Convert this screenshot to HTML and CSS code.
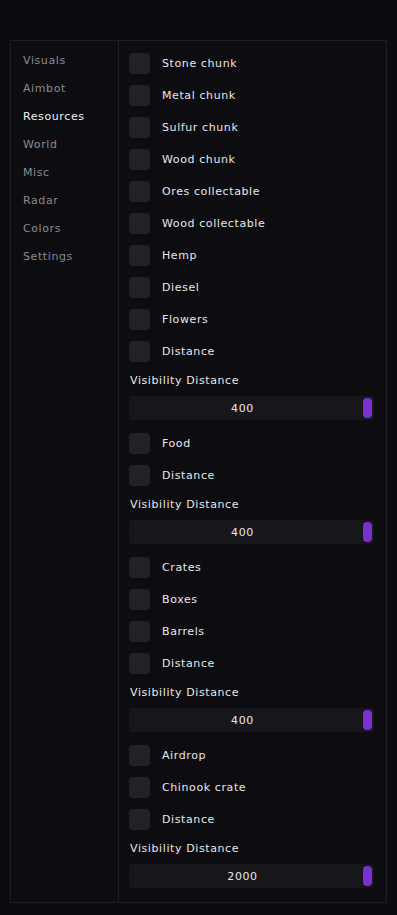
FILE: index.html
```html
<!DOCTYPE html>
<html>
<head>
<meta charset="utf-8">
<link rel="stylesheet" href="styles.css">
</head>
<body>
<div class="panel">
  <nav class="sidebar">
    <div class="tab">Visuals</div>
    <div class="tab">Aimbot</div>
    <div class="tab active">Resources</div>
    <div class="tab">World</div>
    <div class="tab">Misc</div>
    <div class="tab">Radar</div>
    <div class="tab">Colors</div>
    <div class="tab">Settings</div>
  </nav>
  <main class="content">
    <div class="row"><span class="box"></span><span>Stone chunk</span></div>
    <div class="row"><span class="box"></span><span>Metal chunk</span></div>
    <div class="row"><span class="box"></span><span>Sulfur chunk</span></div>
    <div class="row"><span class="box"></span><span>Wood chunk</span></div>
    <div class="row"><span class="box"></span><span>Ores collectable</span></div>
    <div class="row"><span class="box"></span><span>Wood collectable</span></div>
    <div class="row"><span class="box"></span><span>Hemp</span></div>
    <div class="row"><span class="box"></span><span>Diesel</span></div>
    <div class="row"><span class="box"></span><span>Flowers</span></div>
    <div class="row"><span class="box"></span><span>Distance</span></div>
    <div class="label">Visibility Distance</div>
    <div class="slider"><span class="value">400</span><span class="thumb"></span></div>
    <div class="row"><span class="box"></span><span>Food</span></div>
    <div class="row"><span class="box"></span><span>Distance</span></div>
    <div class="label">Visibility Distance</div>
    <div class="slider"><span class="value">400</span><span class="thumb"></span></div>
    <div class="row"><span class="box"></span><span>Crates</span></div>
    <div class="row"><span class="box"></span><span>Boxes</span></div>
    <div class="row"><span class="box"></span><span>Barrels</span></div>
    <div class="row"><span class="box"></span><span>Distance</span></div>
    <div class="label">Visibility Distance</div>
    <div class="slider"><span class="value">400</span><span class="thumb"></span></div>
    <div class="row"><span class="box"></span><span>Airdrop</span></div>
    <div class="row"><span class="box"></span><span>Chinook crate</span></div>
    <div class="row"><span class="box"></span><span>Distance</span></div>
    <div class="label">Visibility Distance</div>
    <div class="slider"><span class="value">2000</span><span class="thumb"></span></div>
  </main>
</div>
</body>
</html>
```
FILE: styles.css
```css
html, body {
  margin: 0;
  padding: 0;
  background: #0c0b0f;
}
body {
  font-family: "DejaVu Sans", sans-serif;
  font-size: 11px;
  letter-spacing: 0.6px;
  color: #e8e8ea;
  padding: 40px 0 0 10px;
}
.panel {
  width: 375px;
  height: 861px;
  border: 1px solid #1f1e24;
  background: #0d0c10;
  display: flex;
}
.sidebar {
  width: 107px;
  border-right: 1px solid #1f1e24;
  padding-top: 6px;
  display: flex;
  flex-direction: column;
}
.tab {
  height: 28px;
  line-height: 28px;
  padding-left: 12px;
  color: #8b8a8f;
}
.tab.active {
  color: #f0f0f2;
}
.content {
  flex: 1;
  padding: 6px 12px 0 10px;
  display: flex;
  flex-direction: column;
}
.row {
  height: 32px;
  display: flex;
  align-items: center;
}
.box {
  width: 21px;
  height: 21px;
  border-radius: 4px;
  background: #222126;
  margin-right: 12px;
  flex: none;
}
.label {
  height: 18px;
  line-height: 18px;
  padding: 5px 0 6px 1px;
}
.slider {
  height: 24px;
  border-radius: 4px;
  background: #17161a;
  display: flex;
  align-items: center;
  margin-bottom: 7px;
}
.value {
  flex: 1;
  text-align: center;
  padding-left: 2px;
}
.thumb {
  width: 9px;
  height: 20px;
  border-radius: 4px;
  background: #7a2fd2;
  margin: 0 2px 0 9px;
  flex: none;
}
```
